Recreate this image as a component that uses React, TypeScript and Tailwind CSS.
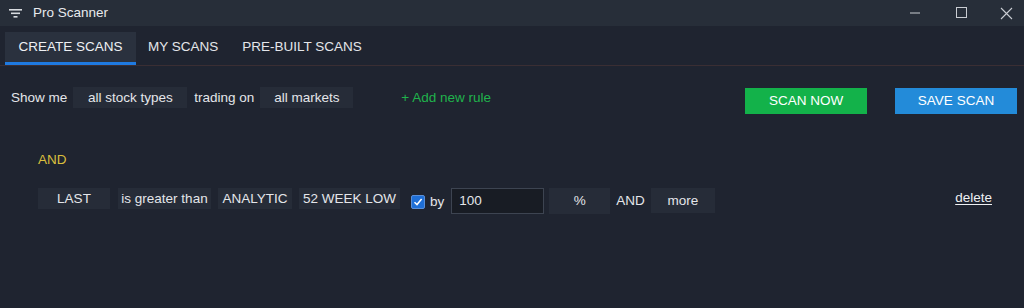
const font = { fontFamily: '"Liberation Sans", Arial, sans-serif' };

function Chip({ children, className = '' }: { children: React.ReactNode; className?: string }) {
  return (
    <span className={`flex items-center justify-center bg-[#262c38] text-[#e4e6ea] ${className}`}>
      {children}
    </span>
  );
}

export default function App() {
  return (
    <div className="w-[1024px] h-[308px] bg-[#1f2430] text-[13.5px] leading-[20px] text-[#e4e6ea] overflow-hidden" style={font}>
      {/* Title bar */}
      <div className="flex items-center h-[26px] bg-[#272e39]">
        <svg width="14" height="12" viewBox="0 0 14 12" className="ml-[9px]">
          <rect x="0" y="2" width="13" height="1.6" fill="#d8dbe0" />
          <rect x="2" y="5.5" width="9" height="1.6" fill="#d8dbe0" />
          <rect x="4.5" y="9" width="4" height="1.6" fill="#d8dbe0" />
        </svg>
        <span className="ml-[10px] text-[#e8eaee]">Pro Scanner</span>
        <div className="ml-auto flex items-center h-full">
          <svg width="12" height="12" viewBox="0 0 12 12" className="mr-[34px]">
            <line x1="1" y1="6" x2="11" y2="6" stroke="#c9ccd2" strokeWidth="1" />
          </svg>
          <svg width="12" height="12" viewBox="0 0 12 12" className="mr-[33px]">
            <rect x="1.5" y="0.5" width="10" height="10" fill="none" stroke="#c9ccd2" strokeWidth="1" />
          </svg>
          <svg width="13" height="13" viewBox="0 0 13 13" className="mr-[11px]">
            <path d="M1 1 L12 12 M12 1 L1 12" stroke="#c9ccd2" strokeWidth="1.1" />
          </svg>
        </div>
      </div>

      {/* Tabs */}
      <div className="flex items-end h-[40px] pl-[5px] border-b border-[#3a2e33]">
        <div className="h-[33px] w-[131px] bg-[#2a313e] border-b-[3px] border-[#1f7ae0] flex items-center justify-center text-[#eef0f3]">
          CREATE SCANS
        </div>
        <div className="h-[33px] flex items-center ml-[12px] pb-[3px]">MY SCANS</div>
        <div className="h-[33px] flex items-center ml-[24px] pb-[3px]">PRE-BUILT SCANS</div>
      </div>

      {/* First row */}
      <div className="flex items-start mt-[21px]">
        <span className="ml-[11px] h-[21px] flex items-center">Show me</span>
        <Chip className="ml-[6px] w-[114px] h-[21px]">all stock types</Chip>
        <span className="ml-[7px] h-[21px] flex items-center">trading on</span>
        <Chip className="ml-[6px] w-[93px] h-[21px]">all markets</Chip>
        <span className="ml-[48px] h-[21px] flex items-center text-[#1fb34c]">+ Add new rule</span>
        <button className="ml-auto mt-[1px] w-[122px] h-[26px] bg-[#13b24a] text-white flex items-center justify-center">
          SCAN NOW
        </button>
        <button className="ml-[28px] mr-[7px] mt-[1px] w-[122px] h-[26px] bg-[#238bd9] text-white flex items-center justify-center">
          SAVE SCAN
        </button>
      </div>

      <div className="ml-[38px] mt-[36px] text-[#d9bf3d]">AND</div>

      {/* Rule row */}
      <div className="flex items-start mt-[18px]">
        <Chip className="ml-[38px] w-[72px] h-[21px]">LAST</Chip>
        <Chip className="ml-[8px] w-[93px] h-[21px]">is greater than</Chip>
        <Chip className="ml-[7px] w-[74px] h-[21px]">ANALYTIC</Chip>
        <Chip className="ml-[7px] w-[101px] h-[21px]">52 WEEK LOW</Chip>
        <span className="ml-[11px] mt-[7px] w-[14px] h-[14px] bg-[#1f6fd6] border border-[#5a8fd8] rounded-[2px] flex items-center justify-center">
          <svg width="10" height="10" viewBox="0 0 10 10">
            <path d="M1.5 5.2 L4 7.6 L8.6 2" fill="none" stroke="white" strokeWidth="1.5" />
          </svg>
        </span>
        <span className="ml-[5px] mt-[4px]">by</span>
        <span className="ml-[7px] w-[93px] h-[26px] bg-[#181c24] border border-[#3d4451] flex items-center pl-[7px]">100</span>
        <Chip className="ml-[5px] w-[61px] h-[26px]">%</Chip>
        <span className="ml-[6px] h-[26px] flex items-center">AND</span>
        <Chip className="ml-[6px] w-[64px] h-[25px]">more</Chip>
        <span className="ml-auto mr-[32px] underline underline-offset-2 text-[#eef0f3]">delete</span>
      </div>
    </div>
  );
}
